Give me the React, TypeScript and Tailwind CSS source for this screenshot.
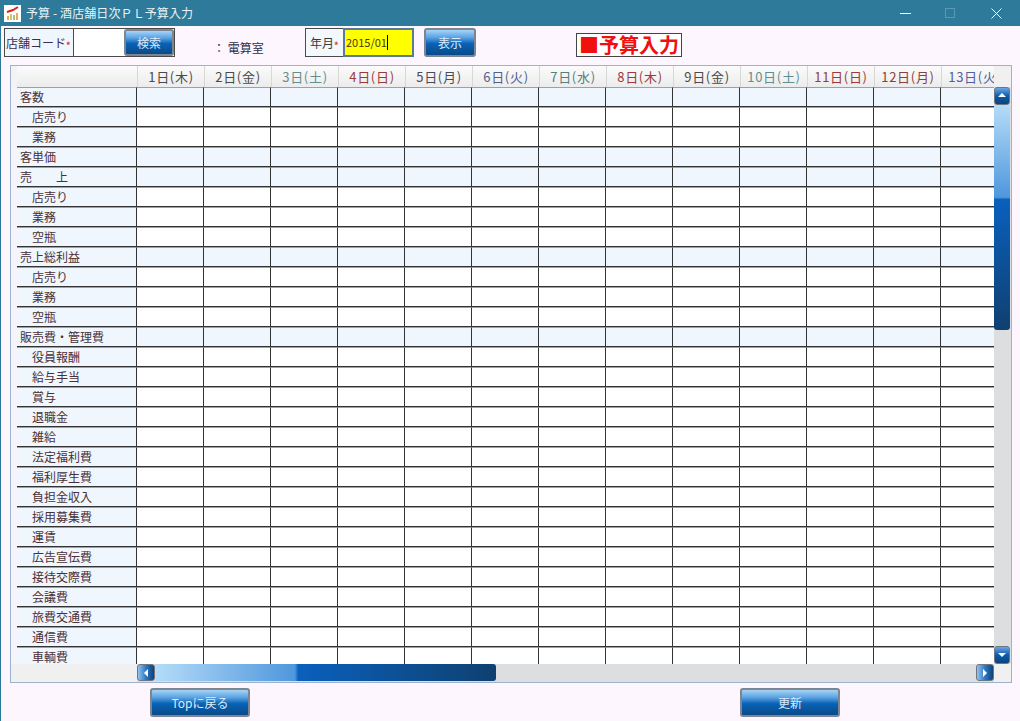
const days = [
  { label: "1日(木)", color: "text-[#4a4a4a]" },
  { label: "2日(金)", color: "text-[#4a4a4a]" },
  { label: "3日(土)", color: "text-[#5f8f8f]" },
  { label: "4日(日)", color: "text-[#9a3a3a]" },
  { label: "5日(月)", color: "text-[#4a4a5a]" },
  { label: "6日(火)", color: "text-[#4f5f8f]" },
  { label: "7日(水)", color: "text-[#4f7f7f]" },
  { label: "8日(木)", color: "text-[#9a3a3a]" },
  { label: "9日(金)", color: "text-[#4a4a4a]" },
  { label: "10日(土)", color: "text-[#5f8f8f]" },
  { label: "11日(日)", color: "text-[#9a3a3a]" },
  { label: "12日(月)", color: "text-[#8a3f3f]" },
  { label: "13日(火)", color: "text-[#4f5f9f]" },
];

const rows = [
  { name: "客数", head: true },
  { name: "店売り" },
  { name: "業務" },
  { name: "客単価", head: true },
  { name: "売　　上", head: true },
  { name: "店売り" },
  { name: "業務" },
  { name: "空瓶" },
  { name: "売上総利益", head: true },
  { name: "店売り" },
  { name: "業務" },
  { name: "空瓶" },
  { name: "販売費・管理費", head: true },
  { name: "役員報酬" },
  { name: "給与手当" },
  { name: "賞与" },
  { name: "退職金" },
  { name: "雑給" },
  { name: "法定福利費" },
  { name: "福利厚生費" },
  { name: "負担金収入" },
  { name: "採用募集費" },
  { name: "運賃" },
  { name: "広告宣伝費" },
  { name: "接待交際費" },
  { name: "会議費" },
  { name: "旅費交通費" },
  { name: "通信費" },
  { name: "車輌費" },
];

function BlueButton({ label, className }: { label: string; className: string }) {
  return (
    <button className={`flex items-center justify-center rounded-[3px] border-2 border-[#7d8590] bg-[linear-gradient(to_bottom,#a6d4f7_0%,#5aa2e2_30%,#0862b5_55%,#0a4a88_100%)] text-[12px] text-[#dcebfa] ${className}`}>
      {label}
    </button>
  );
}

function ScrollButton({ dir }: { dir: "up" | "down" | "left" | "right" }) {
  const points = {
    up: "2,7 6,3 10,7",
    down: "2,4 6,8 10,4",
    left: "8,2 4,6 8,10",
    right: "4,2 8,6 4,10",
  }[dir];
  const horizontal = dir === "left" || dir === "right";
  return (
    <div
      className={`flex shrink-0 items-center justify-center rounded-[3px] border border-[#6f7680] ${
        horizontal
          ? "h-[17px] w-[18px] bg-[linear-gradient(to_right,#8fc3ee,#2f78c4_50%,#0c4378)]"
          : "h-[18px] w-[16px] bg-[linear-gradient(to_bottom,#6aa7e4,#0a5cad_50%,#0c4378)]"
      }`}
    >
      <svg width="12" height="12" viewBox="0 0 12 12">
        <polygon points={points} fill="#ffffff" />
      </svg>
    </div>
  );
}

export default function App() {
  return (
    <div className="flex h-[721px] w-[1020px] flex-col overflow-hidden border-l border-[#2e7a9a] bg-[#fdf6fe] font-['Noto_Sans_CJK_JP','Noto_Sans',sans-serif]">
      {/* title bar */}
      <div className="ml-[-1px] flex h-[26px] shrink-0 items-center bg-[#2e7a9a] pl-[4px] text-[12px] text-[#e8f2f6]">
        <div className="flex h-[17px] w-[17px] items-center justify-center bg-white">
          <svg width="16" height="16" viewBox="0 0 16 16">
            <rect x="2" y="11" width="2" height="4" fill="#e0b060" />
            <rect x="5" y="9" width="2" height="6" fill="#d8c070" />
            <rect x="8" y="10" width="2" height="5" fill="#a8c070" />
            <rect x="11" y="8" width="2" height="7" fill="#e0b060" />
            <path d="M2 7 L8 5 L13 2" stroke="#e02020" strokeWidth="2" fill="none" />
          </svg>
        </div>
        <span className="ml-[5px] tracking-[0.1px]">予算 - 酒店舗日次ＰＬ予算入力</span>
        <div className="ml-auto flex items-center">
          <div className="h-px w-[11px] bg-white" />
          <div className="ml-[34px] h-[10px] w-[10px] border border-[#5b98b2]" />
          <svg className="ml-[36px] mr-[18px]" width="11" height="11" viewBox="0 0 11 11">
            <path d="M0.5 0.5 L10.5 10.5 M10.5 0.5 L0.5 10.5" stroke="#ffffff" strokeWidth="1" />
          </svg>
        </div>
      </div>

      {/* search bar */}
      <div className="flex h-[39px] shrink-0 items-start pl-[3px] pt-[2px]">
        <div className="flex h-[29px] w-[171px] border border-[#4a4a4a]">
          <div className="flex w-[69px] items-center border-r border-[#4a4a4a] bg-[#eff6fd] pl-px text-[12px] text-[#3a2f4a]">
            店舗コード<span className="mt-[6px] text-[9px] font-bold leading-none text-[#e03030]">*</span>
          </div>
          <div className="w-[50px] bg-white" />
          <BlueButton label="検索" className="flex-1" />
        </div>
        <div className="ml-[38px] mt-[11px] w-[92px] text-[12px] text-[#2f2f4a]">：&nbsp;電算室</div>
        <div className="flex h-[29px] w-[109px]">
          <div className="flex w-[38px] items-center border border-r-0 border-[#4a4a4a] bg-[#f3f8fd] pl-[4px] text-[12px] text-[#3a3a3a]">
            年月<span className="mt-[6px] text-[9px] font-bold leading-none text-[#e03030]">*</span>
          </div>
          <div className="flex flex-1 items-center border-2 border-[#5a7a9a] bg-[#ffff00] pl-px text-[11px] text-[#4a3a10]">
            2015/01<span className="h-[15px] w-px bg-black" />
          </div>
        </div>
        <BlueButton label="表示" className="ml-[10px] h-[29px] w-[52px]" />
        <div className="ml-[100px] mt-[5px] flex h-[24px] w-[106px] items-center justify-center border border-[#444444] bg-white text-[20px] font-bold leading-none text-[#f01010]">
          ■予算入力
        </div>
      </div>

      {/* grid */}
      <div className="ml-[9px] flex h-[618px] w-[1002px] shrink-0 flex-col overflow-hidden border border-[#9db2cc]">
        <div className="flex h-[21px] shrink-0">
          <div className="flex w-[983px] overflow-hidden">
            <div className="w-[6px] shrink-0 bg-[#f3f3f6]" />
            <div className="w-[120px] shrink-0 bg-[linear-gradient(to_bottom,#fbfbfb,#ececec)]" />
            {days.map((d) => (
              <div
                key={d.label}
                className={`flex w-[67px] shrink-0 items-center justify-center whitespace-nowrap border-l border-[#d8d8d8] bg-[linear-gradient(to_bottom,#fbfbfb,#ececec)] text-[13px] tracking-[0.7px] ${d.color}`}
              >
                {d.label}
              </div>
            ))}
          </div>
          <div className="flex-1 bg-[#f0f0f0]" />
        </div>

        <div className="flex min-h-0 flex-1">
          <div className="flex w-[983px] flex-col overflow-hidden">
            {rows.map((r, i) => (
              <div key={i} className="flex h-[20px] shrink-0">
                <div className="w-[6px] shrink-0 bg-[#f6f3fa]" />
                <div
                  className={`flex w-[120px] shrink-0 items-center border-b border-r border-t border-b-[#333333] border-r-[#333333] border-t-[#a0a0a0] bg-[#eff6fd] text-[12px] text-[#4a3038] ${
                    r.head ? "pl-[3px]" : "pl-[15px]"
                  }`}
                >
                  {r.name}
                </div>
                {days.map((d) => (
                  <div
                    key={d.label}
                    className={`w-[67px] shrink-0 border-b border-r border-t border-b-[#333333] border-r-[#333333] border-t-[#a0a0a0] ${r.head ? "bg-[#eff6fd]" : "bg-white"}`}
                  />
                ))}
              </div>
            ))}
          </div>
          <div className="flex flex-1 flex-col bg-[#dcdee0]">
            <ScrollButton dir="up" />
            <div className="h-[225px] w-[16px] rounded-b-[3px] bg-[linear-gradient(to_bottom,#b5dcf8_0%,#4f97dd_41%,#0a60bd_42%,#0f4070_100%)]" />
            <div className="flex-1" />
            <ScrollButton dir="down" />
          </div>
        </div>

        <div className="flex h-[18px] shrink-0">
          <div className="w-[126px] shrink-0 bg-[#f0f0f0]" />
          <div className="flex w-[857px] bg-[#dcdee0]">
            <ScrollButton dir="left" />
            <div className="h-[17px] w-[341px] rounded-r-[3px] bg-[linear-gradient(to_right,#b5dcf8_0%,#4f97dd_41%,#0a60bd_42%,#0f4070_100%)]" />
            <div className="flex-1" />
            <ScrollButton dir="right" />
          </div>
          <div className="flex-1 bg-[#f0f0f0]" />
        </div>
      </div>

      {/* footer */}
      <div className="ml-[149px] mt-[5px] flex">
        <BlueButton label="Topに戻る" className="h-[29px] w-[100px]" />
        <BlueButton label="更新" className="ml-[490px] h-[29px] w-[100px]" />
      </div>
    </div>
  );
}
